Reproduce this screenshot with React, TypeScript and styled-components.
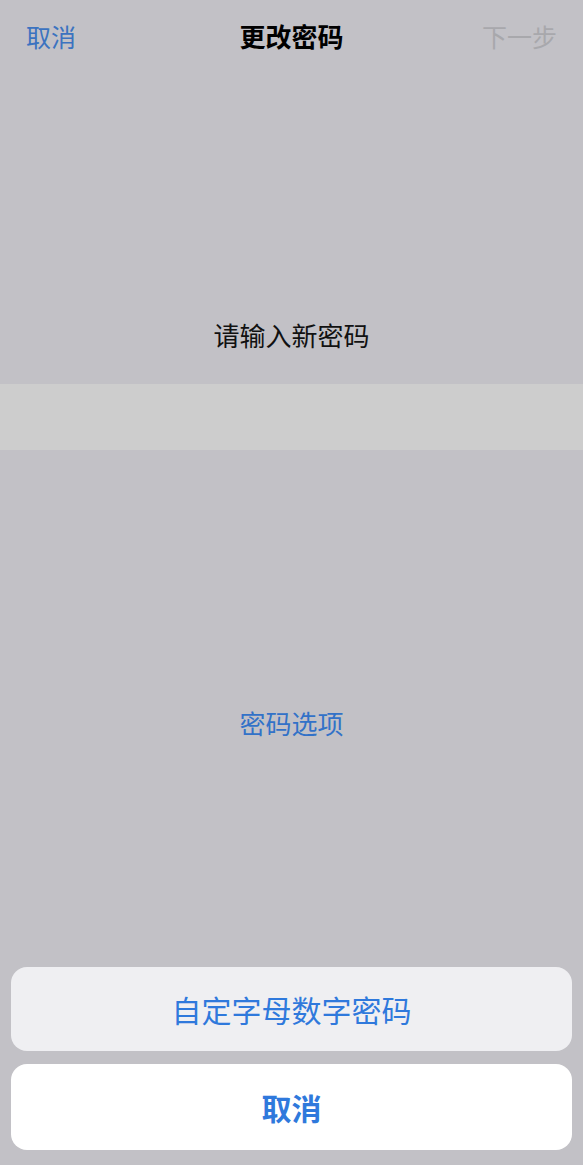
import React from "react";
import styled, { createGlobalStyle } from "styled-components";

const GlobalStyle = createGlobalStyle`
  html, body {
    margin: 0;
    padding: 0;
    background: #c2c1c6;
  }
  body {
    font-family: "Noto Sans CJK SC", "Noto Sans", sans-serif;
  }
`;

const App: React.FC = () => {
  return (
    <>
      <GlobalStyle />
      <Page>
        <NavBar>
          <NavButton>取消</NavButton>
          <NavTitle>更改密码</NavTitle>
          <NavButton $disabled>下一步</NavButton>
        </NavBar>

        <Prompt>请输入新密码</Prompt>
        <PasscodeField />

        <OptionsLink>密码选项</OptionsLink>

        <Sheet>
          <SheetButton>自定字母数字密码</SheetButton>
          <SheetButton $cancel>取消</SheetButton>
        </Sheet>
      </Page>
    </>
  );
};

export default App;

const Page = styled.div`
  height: 100vh;
  display: flex;
  flex-direction: column;
  background: #c2c1c6;
  overflow: hidden;
`;

const NavBar = styled.div`
  height: 72px;
  padding: 0 26px;
  display: grid;
  grid-template-columns: 1fr auto 1fr;
  align-items: center;
`;

const NavButton = styled.div<{ $disabled?: boolean }>`
  font-size: 25px;
  line-height: 30px;
  color: ${(p) => (p.$disabled ? "#a8a8ac" : "#3b73c0")};
  justify-self: ${(p) => (p.$disabled ? "end" : "start")};
  cursor: pointer;
`;

const NavTitle = styled.div`
  font-size: 26px;
  line-height: 30px;
  font-weight: 700;
  color: #000;
`;

const Prompt = styled.div`
  margin-top: 248px;
  text-align: center;
  font-size: 26px;
  line-height: 30px;
  color: #111;
`;

const PasscodeField = styled.div`
  margin-top: 34px;
  height: 66px;
  background: #cdcdcd;
`;

const OptionsLink = styled.div`
  margin-top: 258px;
  text-align: center;
  font-size: 26px;
  line-height: 30px;
  color: #3272c8;
  cursor: pointer;
`;

const Sheet = styled.div`
  margin-top: auto;
  padding: 0 11px 15px;
  display: flex;
  flex-direction: column;
  gap: 13px;
`;

const SheetButton = styled.div<{ $cancel?: boolean }>`
  height: ${(p) => (p.$cancel ? "86px" : "84px")};
  border-radius: 16px;
  background: ${(p) => (p.$cancel ? "#ffffff" : "#efeff2")};
  display: flex;
  align-items: center;
  justify-content: center;
  font-size: 30px;
  font-weight: ${(p) => (p.$cancel ? 700 : 400)};
  color: #2f79dc;
  cursor: pointer;
`;
